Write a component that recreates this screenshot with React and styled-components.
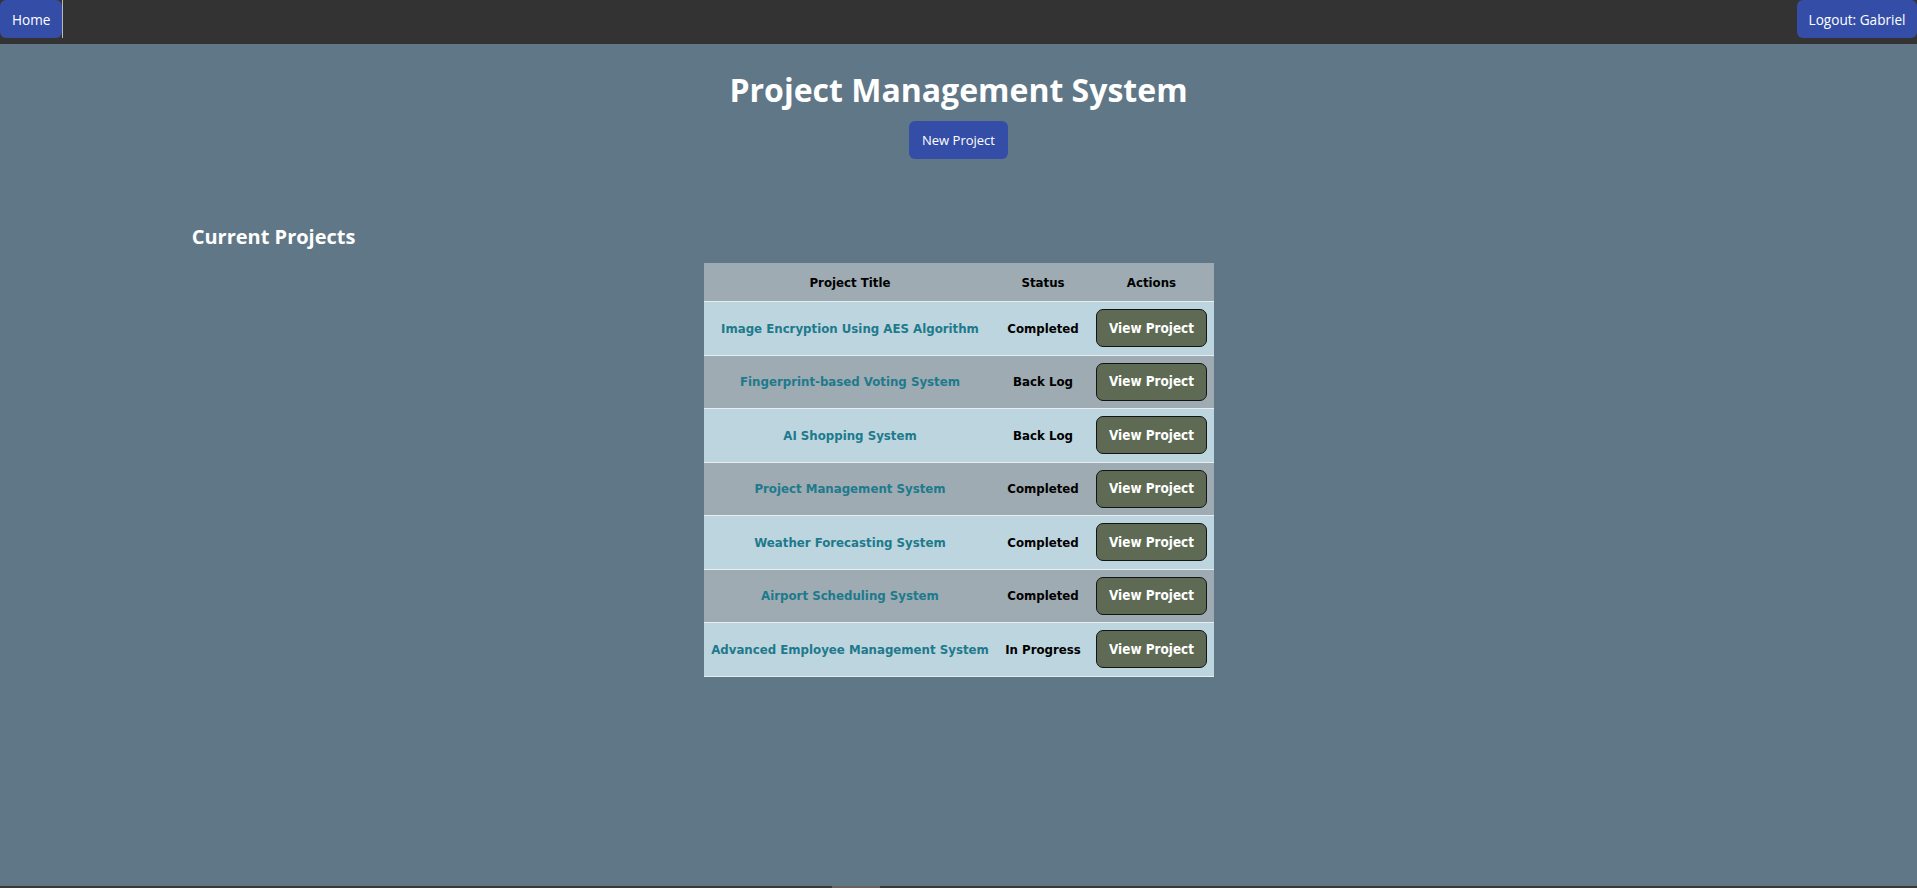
import styled, { createGlobalStyle } from 'styled-components';

const GlobalStyle = createGlobalStyle`
    html, body {
        margin: 0;
        padding: 0;
        background: #607787;
        font-family: "Open Sans", "Noto Sans", sans-serif;
    }
`;

const Page = styled.div`
    min-height: 100vh;
    display: flex;
    flex-direction: column;
`;

const NavBar = styled.nav`
    height: 44px;
    background: #333333;
    display: flex;
    justify-content: space-between;
    align-items: flex-start;
`;

const NavLeft = styled.div`
    display: flex;
    height: 38px;
    border-right: 1px solid #b8b8b8;
`;

const NavButton = styled.a`
    display: flex;
    align-items: center;
    justify-content: center;
    height: 38px;
    padding: 0 ${props => props.$pad || 12}px;
    background: #344ea8;
    color: #ffffff;
    font-size: 13.6px;
    border-radius: 6px;
    text-decoration: none;
    cursor: pointer;
`;

const Main = styled.main`
    flex: 1;
    display: flex;
    flex-direction: column;
    align-items: center;
`;

const Title = styled.h1`
    margin: 26px 0 0;
    font-size: 32px;
    line-height: 40px;
    font-weight: 700;
    color: #ffffff;
`;

const PrimaryButton = styled.button`
    margin-top: 11px;
    width: 99px;
    height: 38px;
    background: #344ea8;
    color: #ffffff;
    border: none;
    border-radius: 6px;
    font-family: inherit;
    font-size: 13px;
    cursor: pointer;
`;

const Section = styled.section`
    align-self: stretch;
    margin: 64px 10% 0;
    display: flex;
    flex-direction: column;
`;

const SectionTitle = styled.h2`
    margin: 0;
    font-size: 20px;
    line-height: 28px;
    font-weight: 700;
    color: #ffffff;
`;

const Table = styled.table`
    margin: 12px auto 0;
    width: 510px;
    table-layout: fixed;
    border-collapse: collapse;
    font-family: "DejaVu Sans Condensed", "Liberation Sans", sans-serif;
    font-size: 13.1px;
    font-weight: 700;
`;

const HeadCell = styled.th`
    height: 38px;
    padding: 0 6px;
    background: #9eabb2;
    color: #000000;
    text-align: center;
    border-bottom: 1px solid #e6eef1;
`;

const Row = styled.tr`
    background: ${props => (props.$alt ? '#9eabb2' : '#bdd5de')};
    border-bottom: 1px solid #e6eef1;
`;

const Cell = styled.td`
    height: 52.5px;
    padding: 0 5px;
    text-align: center;
    color: #000000;
    white-space: nowrap;
`;

const ProjectLink = styled.a`
    color: #1d7a8c;
    text-decoration: none;
    cursor: pointer;
`;

const ViewButton = styled.button`
    width: 111px;
    height: 38px;
    background: #5e6a54;
    color: #ffffff;
    border: 1px solid #141414;
    border-radius: 7px;
    font-family: inherit;
    font-size: 13.4px;
    font-weight: 700;
    cursor: pointer;
`;

const BottomBar = styled.div`
    height: 2px;
    background: #3d3633;
    display: flex;
    padding-left: 832px;
`;

const BarThumb = styled.div`
    width: 48px;
    background: #6b625c;
`;

const projects = [
    { title: 'Image Encryption Using AES Algorithm', status: 'Completed' },
    { title: 'Fingerprint-based Voting System', status: 'Back Log' },
    { title: 'AI Shopping System', status: 'Back Log' },
    { title: 'Project Management System', status: 'Completed' },
    { title: 'Weather Forecasting System', status: 'Completed' },
    { title: 'Airport Scheduling System', status: 'Completed' },
    { title: 'Advanced Employee Management System', status: 'In Progress' },
];

const App = () => {
    return (
        <Page>
            <GlobalStyle />
            <NavBar>
                <NavLeft>
                    <NavButton $pad={12}>Home</NavButton>
                </NavLeft>
                <NavButton $pad={11.5}>Logout: Gabriel</NavButton>
            </NavBar>
            <Main>
                <Title>Project Management System</Title>
                <PrimaryButton>New Project</PrimaryButton>
                <Section>
                    <SectionTitle>Current Projects</SectionTitle>
                    <Table>
                        <colgroup>
                            <col style={{ width: 293 }} />
                            <col style={{ width: 93 }} />
                            <col style={{ width: 124 }} />
                        </colgroup>
                        <thead>
                            <tr>
                                <HeadCell>Project Title</HeadCell>
                                <HeadCell>Status</HeadCell>
                                <HeadCell>Actions</HeadCell>
                            </tr>
                        </thead>
                        <tbody>
                            {projects.map((p, i) => (
                                <Row key={p.title} $alt={i % 2 === 1}>
                                    <Cell>
                                        <ProjectLink>{p.title}</ProjectLink>
                                    </Cell>
                                    <Cell>{p.status}</Cell>
                                    <Cell>
                                        <ViewButton>View Project</ViewButton>
                                    </Cell>
                                </Row>
                            ))}
                        </tbody>
                    </Table>
                </Section>
            </Main>
            <BottomBar>
                <BarThumb />
            </BottomBar>
        </Page>
    );
};

export default App;
